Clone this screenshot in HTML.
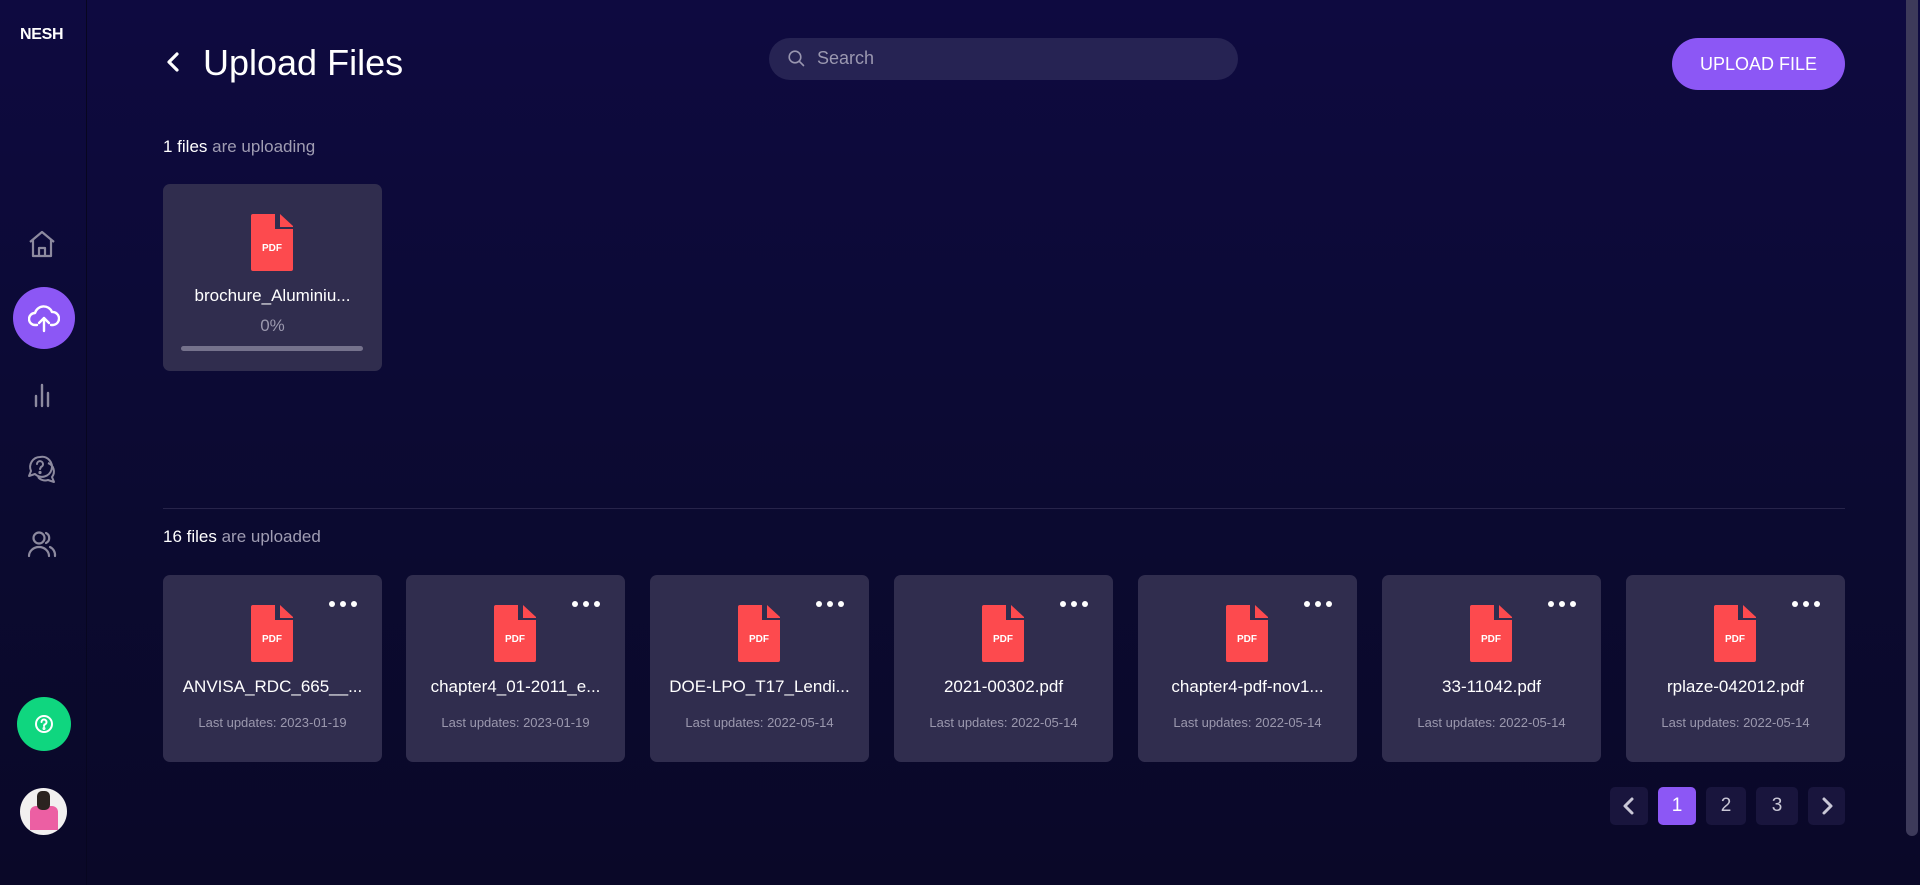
<!DOCTYPE html>
<html><head><meta charset="utf-8"><style>
*{box-sizing:border-box;margin:0;padding:0}
body{width:1920px;height:885px;overflow:hidden;font-family:"Liberation Sans",sans-serif;background:linear-gradient(180deg,#0e0a40 0%,#0b0a30 60%,#0a0828 100%);position:relative;color:#fff}
.side{position:absolute;left:0;top:0;width:87px;height:885px;border-right:1px solid #070620}
.abs{position:absolute}
.logo{left:20px;top:26px;font-weight:bold;font-size:16px;letter-spacing:-0.3px}
.ic{position:absolute;left:26px}
.card{position:absolute;width:219px;height:187px;background:#302d4e;border-radius:7px}
.pdf{position:absolute;left:88px;width:42px;height:57px}
.name{position:absolute;left:0;right:0;text-align:center;font-size:17px;white-space:nowrap}
.date{position:absolute;left:0;right:0;text-align:center;font-size:13px;color:#9b98ae}
.dots{position:absolute;right:25px;top:26px;display:flex;gap:5px}
.dots i{width:6px;height:6px;border-radius:50%;background:#fff;display:block}
.pg{position:absolute;top:787px;height:38px;border-radius:5px;background:#19153d;color:#c9c7d6;font-size:19px;text-align:center;line-height:38px}
</style></head><body>
<div class="side">
<div class="abs logo">NESH</div>
<svg class="ic" style="top:229px" width="32" height="30" viewBox="0 0 32 30" fill="none" stroke="#8d8a9f" stroke-width="2.2" stroke-linejoin="round"><path d="M4 13 L16 3 L28 13 M7 11 V27 H25 V11 M13 27 V19 H19 V27"/></svg>
<div class="abs" style="left:13px;top:287px;width:62px;height:62px;border-radius:50%;background:#8c57f5"></div>
<svg class="abs" style="left:28px;top:303px" width="32" height="30" viewBox="0 0 32 30" fill="none" stroke="#fff" stroke-width="2.4" stroke-linecap="round" stroke-linejoin="round"><path d="M9 22 H7 A6 6 0 0 1 7 10 A9 9 0 0 1 24 9 A6 6 0 0 1 25 22 H23"/><path d="M16 28 V15 M11 20 L16 15 L21 20"/></svg>
<svg class="ic" style="top:382px" width="32" height="26" viewBox="0 0 32 26" stroke="#8d8a9f" stroke-width="2.4" stroke-linecap="round"><path d="M10 24 V14 M16 24 V3 M22 24 V11"/></svg>
<svg class="ic" style="top:454px" width="32" height="30" viewBox="0 0 32 30" fill="none" stroke="#8d8a9f" stroke-width="2" stroke-linejoin="round"><path d="M14 3 A10 10 0 0 0 5 17 L3 22 L9 20 A10 10 0 1 0 14 3Z"/><path d="M22 9 A9 9 0 0 1 26 23 L28 28 L22 26 A9 9 0 0 1 12 23"/><path d="M11 10 A3 3 0 1 1 15 13 L14 15" stroke-linecap="round"/><circle cx="14" cy="18.5" r="0.6" fill="#8d8a9f"/></svg>
<svg class="ic" style="top:530px" width="32" height="28" viewBox="0 0 32 28" fill="none" stroke="#8d8a9f" stroke-width="2.2" stroke-linecap="round"><circle cx="13" cy="8" r="5.5"/><path d="M3 26 A10 9 0 0 1 23 26 M20 3 A5.5 5.5 0 0 1 20 13 M24 17 A9 9 0 0 1 29 26"/></svg>
<div class="abs" style="left:17px;top:697px;width:54px;height:54px;border-radius:50%;background:#0fd67f"></div>
<svg class="abs" style="left:34px;top:714px" width="20" height="20" viewBox="0 0 20 20" fill="none" stroke="#fff" stroke-width="2"><circle cx="10" cy="10" r="8"/><path d="M7.5 8 A2.5 2.5 0 1 1 10.5 10.5 L10 12" stroke-linecap="round"/><circle cx="10" cy="14.5" r="0.5" fill="#fff"/></svg>
<div class="abs" style="left:20px;top:788px;width:47px;height:47px;border-radius:50%;background:#f2f0f0;overflow:hidden"><div class="abs" style="left:10px;top:18px;width:28px;height:24px;background:#ec5fa3;border-radius:6px 6px 0 0"></div><div class="abs" style="left:17px;top:3px;width:13px;height:19px;background:#2b2320;border-radius:5px"></div></div>
</div>

<svg class="abs" style="left:164px;top:51px" width="18" height="22" viewBox="0 0 18 22" fill="none" stroke="#fff" stroke-width="3.2" stroke-linecap="round" stroke-linejoin="round"><path d="M13 3 L5 11 L13 19"/></svg>
<div class="abs" style="left:203px;top:42px;font-size:36px">Upload Files</div>

<div class="abs" style="left:769px;top:38px;width:469px;height:42px;border-radius:21px;background:#262353"></div>
<svg class="abs" style="left:788px;top:50px" width="17" height="17" viewBox="0 0 17 17" fill="none" stroke="#9996b0" stroke-width="1.6"><circle cx="7" cy="7" r="5.8"/><path d="M11.3 11.3 L15.5 15.5" stroke-linecap="round"/></svg>
<div class="abs" style="left:817px;top:48px;font-size:18px;color:#9b98b0">Search</div>

<div class="abs" style="left:1672px;top:38px;width:173px;height:52px;border-radius:26px;background:#8c57f5;text-align:center;line-height:52px;font-size:18px">UPLOAD FILE</div>

<div class="abs" style="left:163px;top:137px;font-size:17px">1 files <span style="color:#a09db3">are uploading</span></div>

<div class="card" style="left:163px;top:184px">
<svg class="pdf" style="top:30px" viewBox="0 0 42 57"><path d="M2 0 H24 V15 H42 V55 A2 2 0 0 1 40 57 H2 A2 2 0 0 1 0 55 V2 A2 2 0 0 1 2 0Z" fill="#fd4a4e"/><path d="M29 0 L42 12 V13 H29Z" fill="#fd4a4e"/><text x="21" y="37" font-size="10" font-weight="bold" fill="#fff" text-anchor="middle" font-family="Liberation Sans">PDF</text></svg>
<div class="name" style="top:102px">brochure_Aluminiu...</div>
<div class="name" style="top:132px;color:#9b98ae">0%</div>
<div class="abs" style="left:18px;top:162px;width:182px;height:5px;border-radius:3px;background:#75728c"></div>
</div>

<div class="abs" style="left:163px;top:508px;width:1682px;height:1px;background:#27244a"></div>
<div class="abs" style="left:163px;top:527px;font-size:17px">16 files <span style="color:#a09db3">are uploaded</span></div>

<div id="cards"></div>
<script>
var d=[["ANVISA_RDC_665__...","2023-01-19"],["chapter4_01-2011_e...","2023-01-19"],["DOE-LPO_T17_Lendi...","2022-05-14"],["2021-00302.pdf","2022-05-14"],["chapter4-pdf-nov1...","2022-05-14"],["33-11042.pdf","2022-05-14"],["rplaze-042012.pdf","2022-05-14"]];
var xs=[163,406,650,894,1138,1382,1626],h="";
d.forEach(function(c,i){h+='<div class="card" style="left:'+xs[i]+'px;top:575px"><div class="dots"><i></i><i></i><i></i></div><svg class="pdf" style="top:30px" viewBox="0 0 42 57"><path d="M2 0 H24 V15 H42 V55 A2 2 0 0 1 40 57 H2 A2 2 0 0 1 0 55 V2 A2 2 0 0 1 2 0Z" fill="#fd4a4e"/><path d="M29 0 L42 12 V13 H29Z" fill="#fd4a4e"/><text x="21" y="37" font-size="10" font-weight="bold" fill="#fff" text-anchor="middle" font-family="Liberation Sans">PDF</text></svg><div class="name" style="top:102px">'+c[0]+'</div><div class="date" style="top:140px">Last updates: '+c[1]+'</div></div>';});
document.getElementById("cards").innerHTML=h;
</script>

<div class="pg" style="left:1610px;width:38px"><svg width="14" height="38" viewBox="0 0 14 38" fill="none" stroke="#c9c7d6" stroke-width="3" stroke-linecap="round" stroke-linejoin="round"><path d="M10 12 L3 19 L10 26"/></svg></div>
<div class="pg" style="left:1658px;width:38px;background:#8c57f5;color:#fff">1</div>
<div class="pg" style="left:1706px;width:40px">2</div>
<div class="pg" style="left:1756px;width:42px">3</div>
<div class="pg" style="left:1808px;width:37px"><svg width="14" height="38" viewBox="0 0 14 38" fill="none" stroke="#c9c7d6" stroke-width="3" stroke-linecap="round" stroke-linejoin="round"><path d="M4 12 L11 19 L4 26"/></svg></div>

<div class="abs" style="left:1906px;top:0;width:12px;height:836px;border-radius:0 0 6px 6px;background:#3d3a5a"></div>
</body></html>
